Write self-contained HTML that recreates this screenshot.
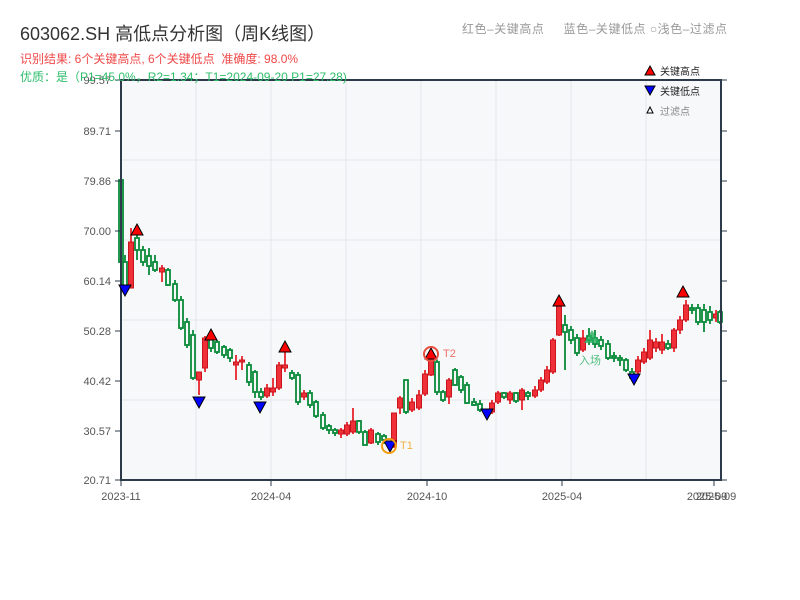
<!DOCTYPE html>
<html><head><meta charset="utf-8"><style>
body{margin:0;width:800px;height:600px;background:#fff;overflow:hidden;font-family:"Liberation Sans","Noto Sans CJK SC",sans-serif}
svg{position:absolute;left:0;top:0}
</style></head><body>
<svg id="s" width="800" height="600" xmlns="http://www.w3.org/2000/svg" font-family="Liberation Sans, Noto Sans CJK SC, sans-serif">
<rect x="121" y="80" width="600" height="400" fill="#f7f8fa"/>
<g stroke="#e3e6eb" stroke-width="1">
<line x1="121" y1="160" x2="721" y2="160"/><line x1="121" y1="240" x2="721" y2="240"/><line x1="121" y1="320" x2="721" y2="320"/><line x1="121" y1="400" x2="721" y2="400"/>
<line x1="196" y1="80" x2="196" y2="480"/><line x1="271" y1="80" x2="271" y2="480"/><line x1="346" y1="80" x2="346" y2="480"/><line x1="421" y1="80" x2="421" y2="480"/><line x1="496" y1="80" x2="496" y2="480"/><line x1="571" y1="80" x2="571" y2="480"/><line x1="646" y1="80" x2="646" y2="480"/>
</g>
<g id="c"></g>
<g stroke="#2d3a4a" stroke-width="2" fill="none">
<rect x="121" y="80" width="600" height="400"/>
</g>
<g stroke="#2d3a4a" stroke-width="1">
<line x1="115" y1="80" x2="121" y2="80"/><line x1="115" y1="131" x2="121" y2="131"/><line x1="115" y1="181" x2="121" y2="181"/><line x1="115" y1="231" x2="121" y2="231"/><line x1="115" y1="281" x2="121" y2="281"/><line x1="115" y1="331" x2="121" y2="331"/><line x1="115" y1="381" x2="121" y2="381"/><line x1="115" y1="431" x2="121" y2="431"/><line x1="115" y1="480" x2="121" y2="480"/>
<line x1="721" y1="80" x2="727" y2="80"/><line x1="721" y1="181" x2="727" y2="181"/><line x1="721" y1="281" x2="727" y2="281"/><line x1="721" y1="381" x2="727" y2="381"/><line x1="721" y1="431" x2="727" y2="431"/><line x1="721" y1="480" x2="727" y2="480"/><line x1="721" y1="331" x2="727" y2="331"/><line x1="721" y1="231" x2="727" y2="231"/><line x1="721" y1="131" x2="727" y2="131"/>
<line x1="121" y1="480" x2="121" y2="486"/><line x1="271" y1="480" x2="271" y2="486"/><line x1="427" y1="480" x2="427" y2="486"/><line x1="562" y1="480" x2="562" y2="486"/><line x1="714" y1="480" x2="714" y2="486"/>
</g>
<g font-size="11" fill="#555" text-anchor="end">
<text x="111" y="84">99.57</text><text x="111" y="135">89.71</text><text x="111" y="185">79.86</text><text x="111" y="235">70.00</text><text x="111" y="285">60.14</text><text x="111" y="335">50.28</text><text x="111" y="385">40.42</text><text x="111" y="435">30.57</text><text x="111" y="484">20.71</text>
</g>
<g font-size="11" fill="#555" text-anchor="middle">
<text x="121" y="500">2023-11</text><text x="271" y="500">2024-04</text><text x="427" y="500">2024-10</text><text x="562" y="500">2025-04</text><text x="707" y="500">2025-09</text><text x="716" y="500">2025-09</text>
</g>
<text x="20" y="40" font-size="18" fill="#333">603062.SH 高低点分析图（周K线图）</text>
<text x="20" y="63" font-size="12" fill="#f04848">识别结果: 6个关键高点, 6个关键低点&#160;&#160;准确度: 98.0%</text>
<text x="20" y="81" font-size="12" fill="#2ebd6b">优质：是（P1=45.0%，R2=1.34；T1=2024-09-20 P1=27.28)</text>
<text x="462" y="33" font-size="12" fill="#999" textLength="265">红色–关键高点&#160;&#160;&#160;&#160;&#160;蓝色–关键低点 ○浅色–过滤点</text>
<g font-size="10">
<polygon points="650,66 655,75 645,75" fill="red" stroke="#000" stroke-width="1"/><text x="660" y="75" fill="#222">关键高点</text>
<polygon points="645,86 655,86 650,95" fill="blue" stroke="#000" stroke-width="1"/><text x="660" y="95" fill="#222">关键低点</text>
<polygon points="650,107 653,113 647,113" fill="#fff" stroke="#000" stroke-width="1"/><text x="660" y="115" fill="#888">过滤点</text>
</g>
<g id="m"></g>
</svg>
<script>
var d=[[121,180,262,180,262,'g'],[125,262,290,255,292,'g'],[131,242,288,228,288,'r'],[137,238,250,228,260,'g'],[143,250,262,246,266,'g'],[149,256,266,248,275,'g'],[155,262,270,255,272,'g'],[162,268,272,265,282,'r'],[168,270,285,268,286,'g'],[175,284,300,280,302,'g'],[181,300,328,296,330,'g'],[187,322,345,318,348,'g'],[193,335,378,330,380,'g'],[199,372,380,372,395,'r'],[205,338,368,336,372,'r'],[211,338,348,336,352,'g'],[217,342,352,340,354,'g'],[224,347,355,345,358,'g'],[230,350,358,348,362,'g'],[236,362,365,355,380,'r'],[242,360,362,356,370,'r'],[249,365,382,362,386,'g'],[255,372,392,370,398,'g'],[261,392,397,388,400,'g'],[267,388,396,384,398,'r'],[273,388,392,378,396,'r'],[279,365,388,362,390,'r'],[285,365,368,350,372,'r'],[292,373,378,370,380,'g'],[298,375,402,372,405,'g'],[304,393,397,390,400,'r'],[310,393,405,390,408,'g'],[316,402,416,400,418,'g'],[323,415,428,412,430,'g'],[329,426,430,424,434,'g'],[335,430,433,428,436,'g'],[341,430,434,428,438,'r'],[347,425,434,422,436,'r'],[353,421,432,408,434,'r'],[359,421,432,420,434,'g'],[365,432,445,430,445,'g'],[371,430,443,428,444,'r'],[378,434,442,432,445,'g'],[384,436,440,434,444,'g'],[394,413,446,413,448,'r'],[400,398,408,396,414,'r'],[406,380,412,380,414,'g'],[412,402,410,398,412,'r'],[419,395,408,390,410,'r'],[425,374,394,370,396,'r'],[431,355,375,352,376,'r'],[437,362,392,360,395,'g'],[443,392,400,390,402,'g'],[449,380,397,378,404,'r'],[455,370,385,368,386,'g'],[461,377,390,375,393,'g'],[467,385,403,382,404,'g'],[474,402,405,398,406,'g'],[480,404,410,400,412,'g'],[492,403,412,400,414,'r'],[498,393,402,391,404,'r'],[504,393,397,392,399,'g'],[510,393,400,391,404,'r'],[516,393,401,392,403,'g'],[522,390,400,388,410,'r'],[528,393,396,391,400,'g'],[535,390,396,386,398,'r'],[541,380,390,377,392,'r'],[547,370,382,366,384,'r'],[553,340,372,338,374,'r'],[559,305,335,300,336,'r'],[565,325,332,315,370,'g'],[571,330,340,326,344,'g'],[577,338,353,334,356,'g'],[583,338,350,330,352,'r'],[589,336,340,328,345,'g'],[595,338,344,330,348,'g'],[601,340,346,336,350,'g'],[608,344,358,340,360,'g'],[614,356,358,352,362,'g'],[620,358,360,355,366,'g'],[626,360,370,358,372,'g'],[632,372,378,368,380,'g'],[638,360,372,356,374,'r'],[644,352,362,348,364,'r'],[650,340,358,330,360,'r'],[656,342,348,338,352,'r'],[662,342,350,334,354,'r'],[668,344,348,340,350,'g'],[674,330,348,328,352,'r'],[680,320,330,316,334,'r'],[686,305,320,300,322,'r'],[692,308,310,304,314,'g'],[698,308,322,304,325,'g'],[704,310,322,304,332,'g'],[710,312,320,306,324,'g'],[716,314,318,310,322,'r'],[720,312,322,310,324,'g']];
var h='';d.forEach(function(c){var col=c[5]=='r'?'#e8252c':'#0a8a3a';var t=Math.min(c[1],c[2]),b=Math.max(c[1],c[2]);if(b-t<2)b=t+2;
h+='<line x1="'+c[0]+'" y1="'+c[3]+'" x2="'+c[0]+'" y2="'+c[4]+'" stroke="'+col+'" stroke-width="1.8"/>';
if(c[5]=='r')h+='<rect x="'+(c[0]-2.5)+'" y="'+t+'" width="5" height="'+(b-t)+'" fill="#f03038" stroke="#c8141c" stroke-width="1"/>';
else h+='<rect x="'+(c[0]-2)+'" y="'+t+'" width="4" height="'+(b-t)+'" fill="#f7f8fa" stroke="'+col+'" stroke-width="1.8"/>';});
document.getElementById('c').innerHTML=h;
var m='';
[[137,230],[211,335],[285,347],[431,354],[559,301],[683,292]].forEach(function(p){m+='<polygon points="'+p[0]+','+(p[1]-6)+' '+(p[0]+6)+','+(p[1]+5)+' '+(p[0]-6)+','+(p[1]+5)+'" fill="red" stroke="#000" stroke-width="1"/>';});
[[125,290],[199,402],[260,407],[390,446],[487,414],[634,379]].forEach(function(p){m+='<polygon points="'+(p[0]-6)+','+(p[1]-5)+' '+(p[0]+6)+','+(p[1]-5)+' '+p[0]+','+(p[1]+6)+'" fill="blue" stroke="#000" stroke-width="1"/>';});
m+='<circle cx="389" cy="446" r="7" fill="none" stroke="#f39c12" stroke-width="2"/><text x="400" y="449" font-size="11" fill="#f5b041">T1</text>';
m+='<circle cx="431" cy="354" r="7" fill="none" stroke="#e74c3c" stroke-width="2"/><text x="443" y="357" font-size="11" fill="#ec7063">T2</text>';
m+='<polygon points="592,330 600,343 584,343" fill="#27ae60" opacity="0.8"/><text x="579" y="364" font-size="11" fill="#52be80">入场</text>';
document.getElementById('m').innerHTML=m;
</script>
</body></html>
